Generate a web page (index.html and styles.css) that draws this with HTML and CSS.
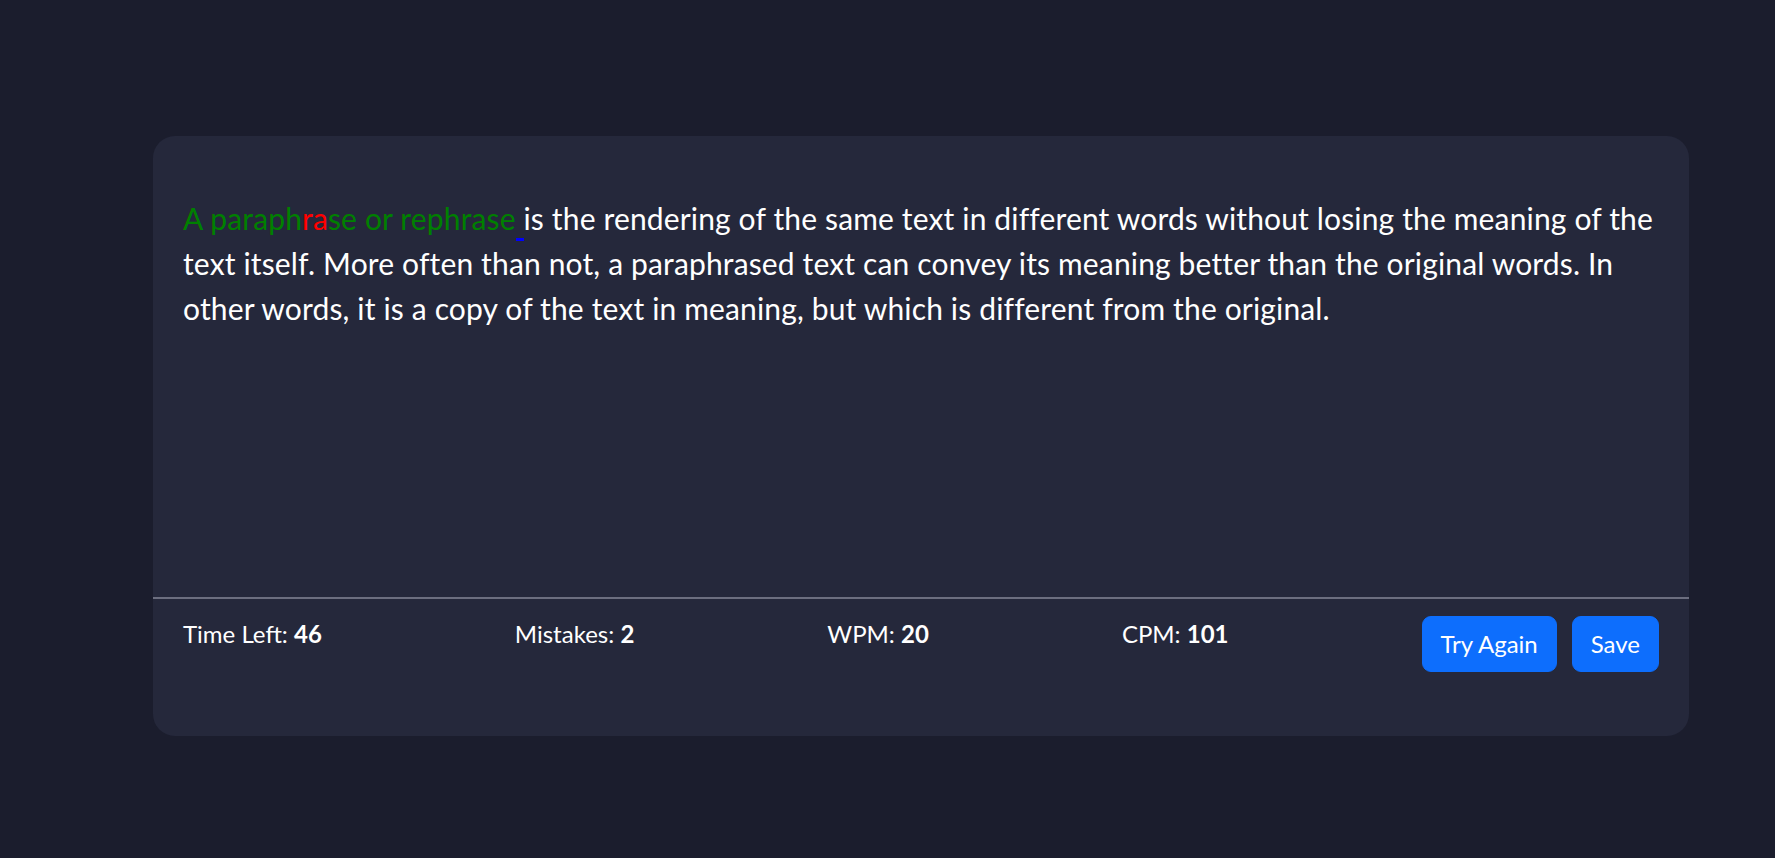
FILE: index.html
```html
<!DOCTYPE html>
<html lang="en">
<head>
<meta charset="utf-8">
<title>Typing Test</title>
<link rel="stylesheet" href="styles.css">
</head>
<body>
<main class="page">
  <section class="card">
    <div class="typing-area">
      <p class="passage"><span class="ok">A paraph</span><span class="bad">ra</span><span class="ok">se or rephrase</span><span class="cursor"> </span>is the rendering of the same text in different words without losing the meaning of the text itself. More often than not, a paraphrased text can convey its meaning better than the original words. In other words, it is a copy of the text in meaning, but which is different from the original.</p>
    </div>
    <footer class="stats">
      <div class="stat">Time Left: <b>46</b></div>
      <div class="stat">Mistakes: <b>2</b></div>
      <div class="stat">WPM: <b>20</b></div>
      <div class="stat">CPM: <b>101</b></div>
      <div class="actions">
        <button class="btn">Try Again</button>
        <button class="btn">Save</button>
      </div>
    </footer>
  </section>
</main>
</body>
</html>
```
FILE: styles.css
```css
html, body {
  margin: 0;
  padding: 0;
  background: #1b1d2d;
  height: 100%;
}
body {
  font-family: Lato, "Liberation Sans", sans-serif;
  color: #ffffff;
}
.page {
  padding: 136px 86px 0 153px;
}
.card {
  background: #25283b;
  border-radius: 22px;
  height: 600px;
  display: flex;
  flex-direction: column;
  box-sizing: border-box;
}
.typing-area {
  flex: 1;
  padding: 60px 30px 0;
}
.passage {
  margin: 0;
  font-size: 30px;
  line-height: 45px;
  letter-spacing: 0.15px;
  color: #ffffff;
}
.ok { color: #008000; }
.bad { color: #ff0000; }
.cursor {
  border-bottom: 3px solid #0000ff;
  padding-bottom: 2px;
}
.stats {
  border-top: 2px solid #6c6e7f;
  padding: 17px 30px 64px;
  display: flex;
  justify-content: space-between;
  align-items: flex-start;
  font-size: 24px;
  line-height: 36px;
}
.stat b { font-weight: 700; }
.actions {
  display: flex;
  gap: 15px;
}
.btn {
  font-family: inherit;
  font-size: 24px;
  line-height: 36px;
  color: #ffffff;
  background: #0d6efd;
  border: 1px solid #0d6efd;
  border-radius: 9px;
  padding: 9px 18px;
  cursor: pointer;
}
```
